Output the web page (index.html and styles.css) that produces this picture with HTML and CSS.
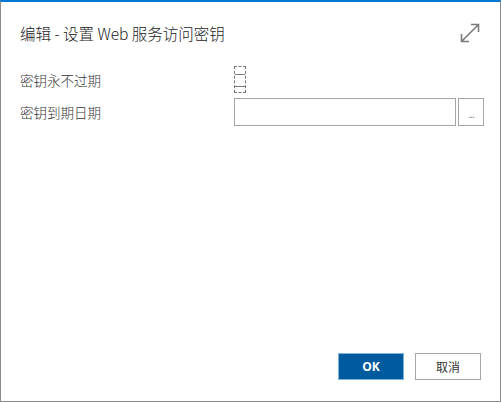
FILE: index.html
```html
<!DOCTYPE html>
<html lang="zh">
<head>
<meta charset="utf-8">
<link rel="stylesheet" href="styles.css">
</head>
<body>
<div class="dialog">
  <div class="header">
    <div class="title">编辑 - 设置 Web 服务访问密钥</div>
    <svg class="expand" width="22" height="22" viewBox="0 0 22 22">
      <path d="M2.5 19.5 L19.5 2.5 M12 2.5 H19.5 V10 M2.5 12 V19.5 H10" fill="none" stroke="#7a7a7a" stroke-width="1.6"/>
    </svg>
  </div>
  <div class="content">
    <div class="form">
      <div class="label">密钥永不过期</div>
      <div class="field"><div class="check"><div class="check-inner"></div></div></div>
      <div class="label">密钥到期日期</div>
      <div class="field date">
        <div class="input"></div>
        <div class="lookup">...</div>
      </div>
    </div>
  </div>
  <div class="footer">
    <div class="btn ok">OK</div>
    <div class="btn cancel">取消</div>
  </div>
</div>
</body>
</html>
```
FILE: styles.css
```css
html, body {
  margin: 0;
  padding: 0;
  background: #fff;
}
body {
  width: 502px;
  height: 403px;
  font-family: "Noto Sans CJK SC", "Noto Sans", sans-serif;
}
.dialog {
  box-sizing: border-box;
  width: 501px;
  height: 402px;
  border-top: 2px solid #0078d4;
  border-left: 1px solid #8c8c8c;
  border-right: 1px solid #8c8c8c;
  border-bottom: 1px solid #8c8c8c;
  display: flex;
  flex-direction: column;
}
.header {
  display: flex;
  align-items: center;
  justify-content: space-between;
  padding: 19px 19px 0 19px;
  height: 24px;
}
.title {
  font-size: 15.5px;
  font-weight: 300;
  line-height: 24px;
  color: #212121;
}
.expand {
  display: block;
}
.content {
  flex: 1;
  padding: 21px 0 0 19px;
}
.form {
  display: grid;
  grid-template-columns: 214px auto;
  grid-template-rows: 27px 28px;
  row-gap: 5px;
  align-items: center;
}
.label {
  font-size: 13.5px;
  font-weight: 300;
  color: #333;
  line-height: 20px;
}
.field {
  display: flex;
  height: 100%;
  align-items: stretch;
}
.check {
  box-sizing: border-box;
  width: 12px;
  height: 27px;
  border: 1px dashed #777;
}
.check-inner {
  box-sizing: border-box;
  margin-top: 7px;
  height: 13px;
  border-top: 1px solid #777;
  border-bottom: 1px solid #777;
}
.date {
  gap: 2px;
}
.input {
  box-sizing: border-box;
  width: 222px;
  height: 28px;
  border: 1px solid #a6a6a6;
}
.lookup {
  box-sizing: border-box;
  width: 26px;
  height: 28px;
  border: 1px solid #a6a6a6;
  font-size: 10px;
  color: #777;
  display: flex;
  align-items: center;
  justify-content: center;
  letter-spacing: -1px;
  padding-top: 2px;
}
.footer {
  display: flex;
  justify-content: flex-end;
  gap: 11px;
  padding: 0 19px 21px 0;
}
.btn {
  box-sizing: border-box;
  width: 66px;
  height: 27px;
  display: flex;
  align-items: center;
  justify-content: center;
  font-size: 12px;
}
.ok {
  background: #005a9e;
  border: 1px solid #7fb2dd;
  color: #fff;
  font-weight: bold;
  font-family: "Open Sans", "Noto Sans", sans-serif;
}
.cancel {
  background: #fff;
  border: 1px solid #a6a6a6;
  color: #333;
}
```
